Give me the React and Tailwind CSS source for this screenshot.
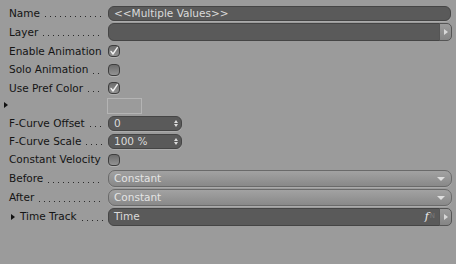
import React from 'react';

const font = { fontFamily: '"DejaVu Sans", Verdana, sans-serif' };

function Dots() {
  return (
    <div className="flex-1 ml-[5px] mt-[7px] h-[1px] bg-[linear-gradient(to_right,#2a2a2a_1px,transparent_1px)] bg-[length:5px_1px] bg-repeat-x" />
  );
}

function Label({ text, dots = true, arrow = false }) {
  return (
    <div className="w-[108px] shrink-0 flex items-center pl-[9px] pr-[5px] h-full">
      {arrow && <span className="mr-[5px] ml-[2px] w-0 h-0 border-y-[3.5px] border-y-transparent border-l-[4px] border-l-[#111]" />}
      <span className="whitespace-nowrap text-[#141414]">{text}</span>
      {dots && <Dots />}
    </div>
  );
}

function Check({ checked }) {
  return (
    <div className="w-[12px] h-[12px] rounded-[4px] border border-[#3e3e3e] bg-[linear-gradient(to_bottom,#6c6c6c,#939393)] shadow-[0_1px_0_#b0b0b0] flex items-center justify-center">
      {checked && (
        <svg width="10" height="10" viewBox="0 0 10 10">
          <path d="M2 5.4 L4 8 L8.3 1.6" fill="none" stroke="#f2f2f2" strokeWidth="1.4" strokeLinecap="round" strokeLinejoin="round" />
        </svg>
      )}
    </div>
  );
}

function SideButton({ h }) {
  return (
    <div className={`w-[13px] ${h} -ml-px rounded-r-[5px] border border-[#555] bg-[linear-gradient(to_bottom,#9c9c9c,#858585)] flex items-center justify-center`}>
      <span className="w-0 h-0 border-y-[3px] border-y-transparent border-l-[4px] border-l-[#d8d8d8]" />
    </div>
  );
}

function Spinner() {
  return (
    <div className="flex flex-col items-center gap-[1px] mr-[3px]">
      <span className="w-0 h-0 border-x-[2.5px] border-x-transparent border-b-[3px] border-b-[#dcdcdc]" />
      <span className="w-0 h-0 border-x-[2.5px] border-x-transparent border-t-[3px] border-t-[#dcdcdc]" />
    </div>
  );
}

function Dropdown({ value }) {
  return (
    <div className="flex-1 mr-[4px] h-[17px] rounded-[7px] border border-[#6a6a6a] bg-[linear-gradient(to_bottom,#a2a2a2,#898989)] shadow-[0_1px_0_#aaa] flex items-center pl-[5px] pr-[6px]">
      <span className="flex-1 text-[#e4e4e4]">{value}</span>
      <span className="w-0 h-0 border-x-[4px] border-x-transparent border-t-[4px] border-t-[#dedede]" />
    </div>
  );
}

export default function App() {
  return (
    <div className="w-[456px] h-[264px] bg-[#9b9b9b] text-[10.5px] leading-none overflow-hidden pt-[4px]" style={font}>
      <div className="h-[18px] flex items-center">
        <Label text="Name" />
        <div className="flex-1 mr-[5px] h-[15px] rounded-[6px] border border-[#454545] bg-[#5a5a5a] shadow-[0_1px_0_#ababab] flex items-center pl-[5px]">
          <span className="text-[#dadada]">&lt;&lt;Multiple Values&gt;&gt;</span>
        </div>
      </div>
      <div className="h-[20px] flex items-center">
        <Label text="Layer" />
        <div className="flex-1 flex items-center mr-[4px]">
          <div className="flex-1 h-[18px] rounded-l-[6px] border border-[#454545] bg-[#5a5a5a]" />
          <SideButton h="h-[18px]" />
        </div>
      </div>
      <div className="h-[18px] flex items-center">
        <Label text="Enable Animation" dots={false} />
        <Check checked />
      </div>
      <div className="h-[19px] flex items-center">
        <Label text="Solo Animation" />
        <Check />
      </div>
      <div className="h-[18px] flex items-center">
        <Label text="Use Pref Color" />
        <Check checked />
      </div>
      <div className="h-[17px] flex items-center relative">
        <span className="absolute left-[4px] top-[5px] w-0 h-0 border-y-[3.5px] border-y-transparent border-l-[4px] border-l-[#111]" />
        <div className="w-[107px] shrink-0" />
        <div className="w-[35px] h-[16px] border border-[#b4b4b4] bg-[#9b9b9b]" />
      </div>
      <div className="h-[18px] flex items-center">
        <Label text="F-Curve Offset" />
        <div className="w-[74px] h-[15px] rounded-[6px] border border-[#454545] bg-[#5a5a5a] shadow-[0_1px_0_#ababab] flex items-center pl-[5px]">
          <span className="flex-1 text-[#dadada]">0</span>
          <Spinner />
        </div>
      </div>
      <div className="h-[18px] flex items-center">
        <Label text="F-Curve Scale" />
        <div className="w-[74px] h-[15px] rounded-[6px] border border-[#454545] bg-[#5a5a5a] shadow-[0_1px_0_#ababab] flex items-center pl-[5px]">
          <span className="flex-1 text-[#dadada]">100 %</span>
          <Spinner />
        </div>
      </div>
      <div className="h-[19px] flex items-center">
        <Label text="Constant Velocity" dots={false} />
        <Check />
      </div>
      <div className="h-[19px] flex items-center">
        <Label text="Before" />
        <Dropdown value="Constant" />
      </div>
      <div className="h-[19px] flex items-center">
        <Label text="After" />
        <Dropdown value="Constant" />
      </div>
      <div className="h-[19px] flex items-center">
        <Label text="Time Track" arrow />
        <div className="flex-1 flex items-center mr-[4px]">
          <div className="flex-1 h-[18px] rounded-l-[6px] border border-[#454545] bg-[#5a5a5a] flex items-center pl-[5px] pr-[4px]">
            <span className="flex-1 text-[#dadada]">Time</span>
            <span className="italic text-[11px] text-[#f0f0f0]" style={{ fontFamily: '"DejaVu Serif", serif' }}>f</span>
            <span className="text-[7px] text-[#7a7a7a] ml-[1px]">N</span>
          </div>
          <SideButton h="h-[18px]" />
        </div>
      </div>
    </div>
  );
}
